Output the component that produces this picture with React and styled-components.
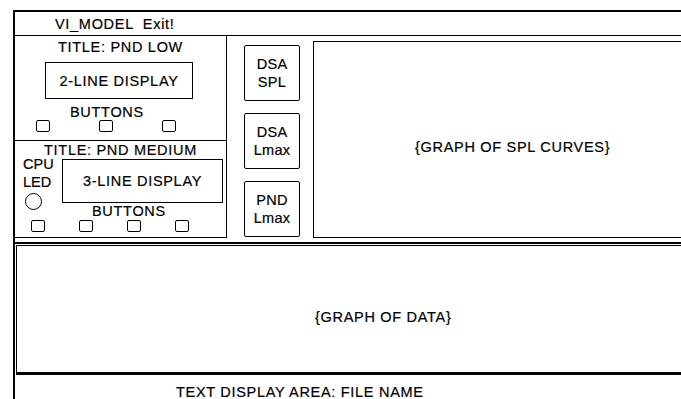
import React from 'react';
import styled, { createGlobalStyle } from 'styled-components';

const GlobalStyle = createGlobalStyle`
  html, body {
    margin: 0;
    padding: 0;
    background: #fff;
    overflow: hidden;
  }
  body {
    font-family: "Liberation Sans", Arial, sans-serif;
    font-size: 14.5px;
    letter-spacing: 0.7px;
    color: #000;
    -webkit-text-stroke: 0.2px #000;
  }
`;

const Frame = styled.div`
  margin: 10px 0 0 13px;
  width: 700px;
  border-left: 2px solid #000;
  border-top: 2px solid #000;
`;

const Header = styled.div`
  height: 23px;
  border-bottom: 1.5px solid #000;
  display: flex;
  align-items: center;
  padding-left: 40px;
`;

const HeaderText = styled.span`
  white-space: pre;
`;

const TopArea = styled.div`
  display: flex;
  align-items: flex-start;
  height: 206px;
  border-bottom: 2px solid #000;
`;

const LeftPanel = styled.div`
  width: 211px;
  height: 201px;
  border-right: 1.5px solid #000;
  border-bottom: 1.5px solid #000;
  display: flex;
  flex-direction: column;
`;

const Section = styled.div`
  display: flex;
  flex-direction: column;
  height: ${(p) => p.$height}px;
  border-bottom: ${(p) => (p.$divider ? '1.5px solid #000' : 'none')};
`;

const Title = styled.div`
  text-align: center;
  line-height: 14px;
  padding-top: ${(p) => p.$top}px;
`;

const Display = styled.div`
  width: ${(p) => p.$w}px;
  height: ${(p) => p.$h}px;
  margin-top: ${(p) => p.$top}px;
  border: 1.5px solid #000;
  box-sizing: border-box;
  display: flex;
  align-items: center;
  justify-content: center;
  flex-shrink: 0;
  white-space: nowrap;
`;

const CenteredDisplay = styled(Display)`
  align-self: center;
  margin-left: -3px;
`;

const ButtonsLabel = styled.div`
  line-height: 14px;
  padding-left: ${(p) => p.$left}px;
  margin-top: ${(p) => p.$top}px;
  position: relative;
  z-index: 1;
`;

const ButtonRow = styled.div`
  display: flex;
  gap: ${(p) => p.$gap}px;
  padding-left: ${(p) => p.$left}px;
  margin-top: ${(p) => p.$top}px;
`;

const Square = styled.div`
  width: 14px;
  height: 12px;
  box-sizing: border-box;
  border: 1.5px solid #000;
  border-radius: 2px;
`;

const MediumRow = styled.div`
  display: flex;
  align-items: flex-start;
  padding-left: 8px;
`;

const LedColumn = styled.div`
  width: 22px;
  display: flex;
  flex-direction: column;
  line-height: 14px;
  margin-right: 17px;
  letter-spacing: 0;
`;

const LedLine = styled.span`
  margin-top: ${(p) => p.$top || 0}px;
`;

const Led = styled.div`
  width: 17px;
  height: 17px;
  box-sizing: border-box;
  border: 1.5px solid #000;
  border-radius: 50%;
  margin-top: 4px;
  margin-left: 2px;
`;

const ModeColumn = styled.div`
  width: 86px;
  padding: 9px 0 0 17px;
  box-sizing: border-box;
  display: flex;
  flex-direction: column;
  gap: 12px;
  flex-shrink: 0;
`;

const ModeButton = styled.div`
  width: 56px;
  height: 56px;
  box-sizing: border-box;
  border: 1.5px solid #000;
  border-radius: 2px;
  display: flex;
  flex-direction: column;
  align-items: center;
  justify-content: center;
  line-height: 18px;
  text-align: center;
  letter-spacing: 0.3px;
`;

const GraphBox = styled.div`
  flex: 1;
  height: 197px;
  margin-top: 5px;
  box-sizing: border-box;
  border: 1.5px solid #000;
  display: flex;
  align-items: center;
  padding: 14px 0 0 101px;
`;

const DataGraph = styled.div`
  height: 130px;
  margin: 1px 0 0 1px;
  box-sizing: border-box;
  border: 1.5px solid #000;
  border-bottom: 3px solid #000;
  display: flex;
  align-items: center;
  padding: 16px 0 0 298px;
`;

const TextArea = styled.div`
  height: 24px;
  padding: 9px 0 0 161px;
  line-height: 16px;
`;

const squares = (n) => Array.from({ length: n }, (_, i) => <Square key={i} />);

export default function App() {
  return (
    <>
      <GlobalStyle />
      <Frame>
        <Header>
          <HeaderText>VI_MODEL  Exit!</HeaderText>
        </Header>
        <TopArea>
          <LeftPanel>
            <Section $height={104} $divider>
              <Title $top={4}>TITLE: PND LOW</Title>
              <CenteredDisplay $w={148} $h={37} $top={8}>
                2-LINE DISPLAY
              </CenteredDisplay>
              <ButtonsLabel $left={55} $top={6}>BUTTONS</ButtonsLabel>
              <ButtonRow $gap={49} $left={21} $top={1}>
                {squares(3)}
              </ButtonRow>
            </Section>
            <Section $height={96}>
              <Title $top={2}>TITLE: PND MEDIUM</Title>
              <MediumRow>
                <LedColumn>
                  <LedLine>CPU</LedLine>
                  <LedLine $top={4}>LED</LedLine>
                  <Led />
                </LedColumn>
                <Display $w={161} $h={44} $top={2}>
                  3-LINE DISPLAY
                </Display>
              </MediumRow>
              <ButtonsLabel $left={77} $top={-6}>BUTTONS</ButtonsLabel>
              <ButtonRow $gap={34} $left={16} $top={2}>
                {squares(4)}
              </ButtonRow>
            </Section>
          </LeftPanel>
          <ModeColumn>
            <ModeButton>
              <span>DSA</span>
              <span>SPL</span>
            </ModeButton>
            <ModeButton>
              <span>DSA</span>
              <span>Lmax</span>
            </ModeButton>
            <ModeButton>
              <span>PND</span>
              <span>Lmax</span>
            </ModeButton>
          </ModeColumn>
          <GraphBox>{'{GRAPH OF SPL CURVES}'}</GraphBox>
        </TopArea>
        <DataGraph>{'{GRAPH OF DATA}'}</DataGraph>
        <TextArea>TEXT DISPLAY AREA: FILE NAME</TextArea>
      </Frame>
    </>
  );
}
